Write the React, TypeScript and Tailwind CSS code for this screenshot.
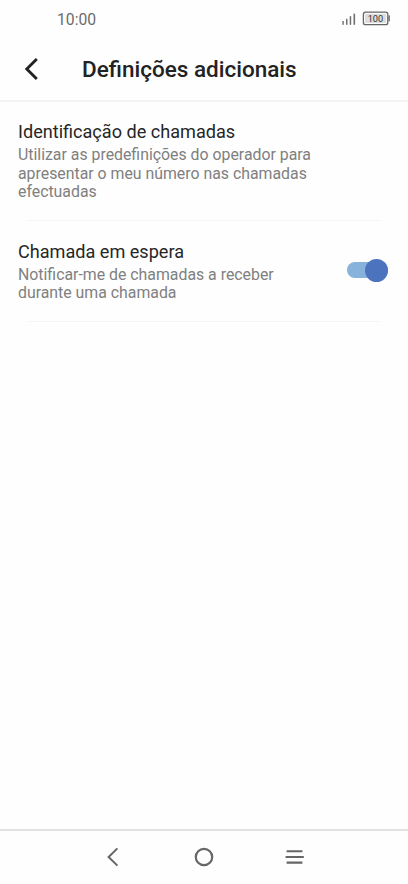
import React from 'react';

interface SettingRowProps {
  title: string;
  lines: string[];
  children?: React.ReactNode;
}

const StatusBar: React.FC = () => (
  <div className="flex h-[38px] items-center justify-between pl-[57px] pr-[18px]">
    <span className="pt-px text-[15.7px] leading-none text-[#6c6c6c]">10:00</span>
    <div className="flex items-center pb-[2px]">
      <svg width="48" height="16" viewBox="0 0 48 16">
        <g fill="#707070">
          <rect x="0.4" y="11" width="1.4" height="3.8" />
          <rect x="4" y="8.8" width="1.5" height="6" />
          <rect x="7.7" y="6.2" width="1.5" height="8.6" />
          <rect x="11.5" y="3.6" width="1.6" height="11.2" />
        </g>
        <rect x="21.4" y="2.1" width="24.4" height="12.6" rx="2.2" fill="#fff" stroke="#666" strokeWidth="1.3" />
        <rect x="23" y="3.7" width="21.2" height="9.4" rx="0.8" fill="#dedede" />
        <rect x="46.4" y="5.4" width="1.5" height="5.8" fill="#707070" />
        <text x="33.4" y="11.7" textAnchor="middle" fontSize="9.2" fill="#333">100</text>
      </svg>
    </div>
  </div>
);

const Header: React.FC = () => (
  <header className="flex h-[64px] items-center border-b-2 border-[#f3f3f3] pl-[24px]">
    <svg width="16" height="24" viewBox="0 0 16 24" fill="none" stroke="#222" strokeWidth="2.9">
      <path d="M12.8 1.9 2.8 12l10 10.1" />
    </svg>
    <h1 className="ml-[42px] pt-px text-[22.5px] font-medium leading-none text-[#222]">Definições adicionais</h1>
  </header>
);

const SettingRow: React.FC<SettingRowProps> = ({ title, lines, children }) => (
  <div className="flex items-center justify-between pl-[18px] pr-[20px]">
    <div>
      <h2 className="mb-[2px] text-[18.1px] leading-[24px] text-[#262626]">{title}</h2>
      {lines.map((line) => (
        <p key={line} className="whitespace-nowrap text-[15.85px] leading-[18.6px] text-[#808080]">{line}</p>
      ))}
    </div>
    {children}
  </div>
);

const Toggle: React.FC = () => (
  <div className="mb-[2px] flex h-[23px] w-[41px] items-center">
    <div className="flex h-[16px] w-full items-center justify-end rounded-full bg-[#87b2db]">
      <div className="h-[23px] w-[23px] shrink-0 rounded-full bg-[#4c73be]" />
    </div>
  </div>
);

const NavBar: React.FC = () => (
  <nav className="flex h-[55px] items-center justify-between border-t-2 border-[#e1e1e1] pb-[2px] pl-[103px] pr-[104px]">
    <svg width="20" height="20" viewBox="0 0 20 20" fill="none" stroke="#666" strokeWidth="2">
      <path d="M14.4 1.4 5.6 10l8.8 8.6" />
    </svg>
    <svg width="20" height="20" viewBox="0 0 20 20" fill="none" stroke="#666" strokeWidth="2.2">
      <circle cx="10" cy="10" r="8.2" />
    </svg>
    <svg width="20" height="20" viewBox="0 0 20 20" fill="none" stroke="#666" strokeWidth="2.1">
      <path d="M2.6 4.2h15.8M1.6 10h18.2M2.6 15.6h15.8" />
    </svg>
  </nav>
);

export default function App() {
  return (
    <div className="flex h-[884px] w-[408px] flex-col overflow-hidden bg-[#fefefe] font-['Roboto',sans-serif]">
      <StatusBar />
      <Header />
      <main className="flex-1 pt-[18px]">
        <SettingRow
          title="Identificação de chamadas"
          lines={['Utilizar as predefinições do operador para', 'apresentar o meu número nas chamadas', 'efectuadas']}
        />
        <div className="mx-[27px] mt-[18px] mb-[19px] h-px bg-[#f6f6f6]" />
        <SettingRow title="Chamada em espera" lines={['Notificar-me de chamadas a receber', 'durante uma chamada']}>
          <Toggle />
        </SettingRow>
        <div className="mx-[27px] mt-[18px] h-px bg-[#f6f6f6]" />
      </main>
      <NavBar />
    </div>
  );
}
